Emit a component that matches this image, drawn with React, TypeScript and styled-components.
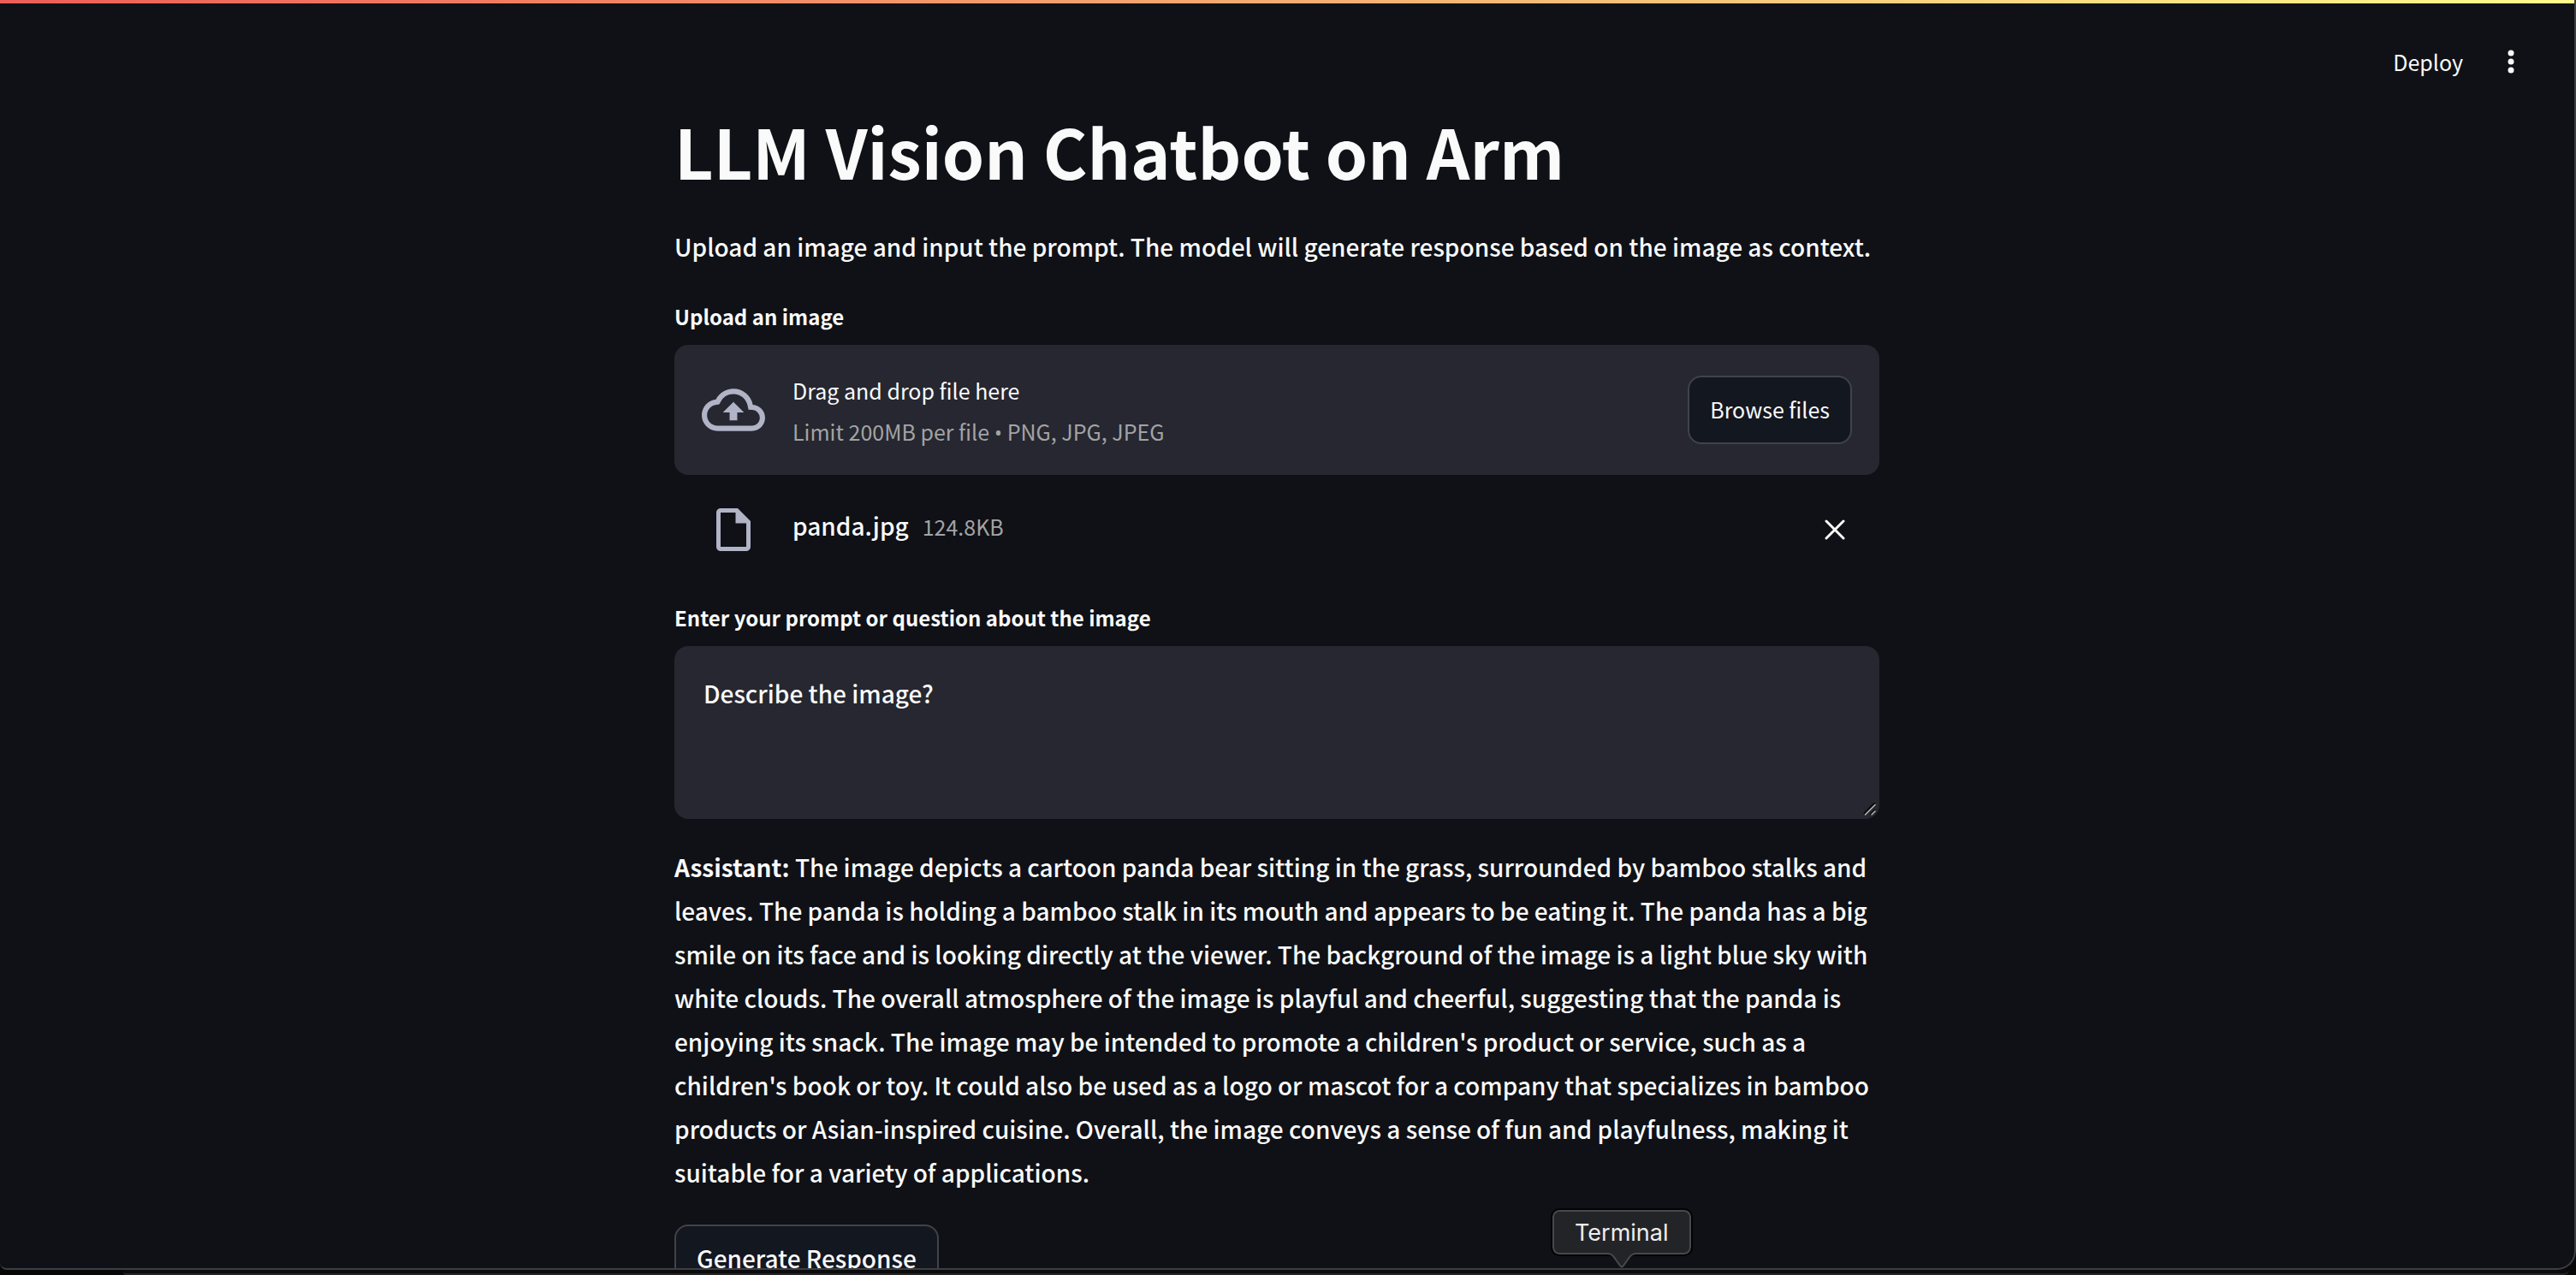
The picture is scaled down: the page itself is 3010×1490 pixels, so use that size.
import React, { useState } from "react";
import styled, { createGlobalStyle } from "styled-components";

const GlobalStyle = createGlobalStyle`
  html, body, #root { height: 100%; }
  body {
    margin: 0;
    overflow: hidden;
    background: #070708;
    color: #fafafa;
    font-family: "Noto Sans CJK SC", "Noto Sans", sans-serif;
    font-size: 28px;
    font-weight: 500;
    line-height: 51px;
  }
  * { box-sizing: border-box; }
`;

const Desktop = styled.div`
  height: 100%;
  display: flex;
  flex-direction: column;
`;

const BrowserWindow = styled.div`
  flex: 1;
  min-height: 0;
  overflow: hidden;
  display: flex;
  flex-direction: column;
  background: #0f1116;
  border: solid #3d3e42;
  border-width: 0 2px 2px 0;
  border-radius: 0 0 22px 8px;
`;

const DockEdge = styled.div`
  height: 6px;
  flex: none;
  margin: 0 8px 0 144px;
  border-bottom: 2px solid #242428;
  border-radius: 0 0 16px 8px;
  background: #0b0b0d;
`;

const Decoration = styled.div`
  height: 4px;
  flex: none;
  background: linear-gradient(90deg, #ed5e58, #fffa8c);
`;

const Header = styled.header`
  flex: none;
  display: flex;
  justify-content: flex-end;
  align-items: center;
  gap: 32px;
  height: 120px;
  padding: 16px 50px 0 0;
`;

const GhostButton = styled.button`
  display: flex;
  align-items: center;
  justify-content: center;
  padding: 0;
  border: 0;
  background: none;
  color: inherit;
  font: inherit;
  font-size: 25px;
  font-weight: 400;
  line-height: 40px;
`;

const Main = styled.main`
  flex: 1;
  min-height: 0;
  padding-right: 24px;
`;

const Column = styled.div`
  width: 100%;
  max-width: 1408px;
  margin: 0 auto;
  display: flex;
  flex-direction: column;
`;

const Title = styled.h1`
  margin: 0;
  font-size: 79px;
  line-height: 104px;
  font-weight: 700;
`;

const Paragraph = styled.p`
  margin: 0;
  padding-bottom: 35px;
`;

const Intro = styled(Paragraph)`
  padding-top: 35px;
`;

const Label = styled.label`
  margin-bottom: 12px;
  font-size: 24px;
  line-height: 42px;
  font-weight: 700;
`;

const Dropzone = styled.section`
  display: flex;
  align-items: center;
  height: 152px;
  padding: 0 32px;
  border-radius: 16px;
  background: #262730;
`;

const IconCell = styled.span`
  display: flex;
  align-items: center;
  justify-content: center;
  width: 74px;
  margin-right: 32px;
  color: #b1b4c6;
`;

const DropText = styled.div`
  flex: 1;
  display: flex;
  flex-direction: column;
  padding-top: 2px;
  font-size: 25px;
  font-weight: 400;
  line-height: 48px;
`;

const Muted = styled.span`
  color: #a3a3a5;
  font-size: 25px;
  font-weight: 400;
`;

const Bullet = styled.span`
  font-family: "Open Sans", sans-serif;
`;

const Button = styled.button<{ $large?: boolean }>`
  flex: none;
  align-self: ${(p) => (p.$large ? "flex-start" : "auto")};
  height: 80px;
  padding: 0 24px 2px;
  border: 2px solid #41434b;
  border-radius: 16px;
  background: #131720;
  color: inherit;
  font: inherit;
  font-size: ${(p) => (p.$large ? 28 : 25)}px;
  font-weight: ${(p) => (p.$large ? 500 : 400)};
`;

const FileInput = styled.input`
  display: none;
`;

const FileRow = styled.div`
  display: flex;
  align-items: center;
  height: 128px;
  padding: 0 32px;
  margin-bottom: 18px;
`;

const FileInfo = styled.div`
  display: flex;
  align-items: baseline;
  gap: 16px;
  padding-bottom: 8px;
`;

const RemoveButton = styled(GhostButton)`
  margin-left: auto;
  width: 40px;
  height: 40px;
`;

const PromptBox = styled.div`
  position: relative;
  display: flex;
  margin-bottom: 31px;
`;

const Prompt = styled.textarea`
  flex: 1;
  height: 202px;
  padding: 30px 34px;
  border: 0;
  border-radius: 16px;
  outline: 0;
  resize: none;
  background: #262730;
  color: inherit;
  font: inherit;
`;

const Grip = styled.svg`
  position: absolute;
  right: 3px;
  bottom: 3px;
`;

const DockTip = styled.div`
  position: absolute;
  left: 1814px;
  top: 1414px;
  display: flex;
  flex-direction: column;
  align-items: center;
`;

const TipLabel = styled.div`
  height: 52px;
  padding: 0 24px;
  border: 2px solid #48494c;
  border-radius: 8px;
  outline: 2px solid #030304;
  background: #232428;
  color: #eeeeee;
  font-family: Inter, sans-serif;
  font-size: 27px;
  font-weight: 400;
  line-height: 50px;
`;

const TipArrow = styled.svg`
  margin-top: -2px;
  position: relative;
`;

export default function App() {
  const [prompt, setPrompt] = useState("Describe the image?");

  return (
    <Desktop>
      <GlobalStyle />
      <BrowserWindow>
        <Decoration />
        <Header>
          <GhostButton type="button">Deploy</GhostButton>
          <GhostButton type="button" aria-label="Menu">
            <svg width="48" height="40" viewBox="0 0 48 40" fill="currentColor">
              <circle cx="24" cy="10" r="3.5" />
              <circle cx="24" cy="20" r="3.5" />
              <circle cx="24" cy="30" r="3.5" />
            </svg>
          </GhostButton>
        </Header>
        <Main>
          <Column>
            <Title>LLM Vision Chatbot on Arm</Title>
            <Intro>
              Upload an image and input the prompt. The model will generate response based on the image as context.
            </Intro>

            <Label htmlFor="image">Upload an image</Label>
            <Dropzone>
              <IconCell>
                <svg width="74" height="74" viewBox="0 0 24 24" fill="currentColor">
                  <path d="M19.35 10.04A7.49 7.49 0 0 0 12 4C9.11 4 6.6 5.64 5.35 8.04A5.994 5.994 0 0 0 0 14c0 3.31 2.69 6 6 6h13c2.76 0 5-2.24 5-5 0-2.64-2.05-4.78-4.65-4.96zM19 18H6c-2.21 0-4-1.79-4-4 0-2.05 1.53-3.76 3.56-3.97l1.07-.11.5-.95A5.469 5.469 0 0 1 12 6c2.62 0 4.88 1.86 5.39 4.43l.3 1.5 1.53.11A2.98 2.98 0 0 1 22 15c0 1.65-1.35 3-3 3zM8 13h2.550v3h2.900v-3H16l-4-4z" />
                </svg>
              </IconCell>
              <DropText>
                <span>Drag and drop file here</span>
                <Muted>
                  Limit 200MB per file <Bullet>•</Bullet> PNG, JPG, JPEG
                </Muted>
              </DropText>
              <FileInput id="image" type="file" accept=".png,.jpg,.jpeg" />
              <Button type="button">Browse files</Button>
            </Dropzone>
            <FileRow>
              <IconCell>
                <svg width="60" height="60" viewBox="0 0 24 24" fill="currentColor">
                  <path d="M14 2H6c-1.100 0-1.990.9-1.990 2L4 20c0 1.100.89 2 1.990 2H18c1.100 0 2-.9 2-2V8l-6-6zM6 20V4h7v5h5v11H6z" />
                </svg>
              </IconCell>
              <FileInfo>
                <span>panda.jpg</span>
                <Muted>124.8KB</Muted>
              </FileInfo>
              <RemoveButton type="button" aria-label="Remove file">
                <svg width="24" height="24" viewBox="0 0 24 24" fill="none" stroke="currentColor" strokeWidth="3" strokeLinecap="round">
                  <path d="M2 2L22 22M22 2L2 22" />
                </svg>
              </RemoveButton>
            </FileRow>

            <Label htmlFor="prompt">Enter your prompt or question about the image</Label>
            <PromptBox>
              <Prompt id="prompt" value={prompt} onChange={(e) => setPrompt(e.target.value)} />
              <Grip width="16" height="16" viewBox="0 0 16 16" fill="none" strokeLinecap="round">
                <path d="M1.500 12.500L13 1M9 13.500L13.500 9" stroke="#08080a" strokeWidth="2" />
                <path d="M2.500 14L14 2.500M10 14L14 10" stroke="#b4b4b8" strokeWidth="1.600" />
              </Grip>
            </PromptBox>

            <Paragraph>
              <strong>Assistant:</strong> The image depicts a cartoon panda bear sitting in the grass, surrounded by
              bamboo stalks and leaves. The panda is holding a bamboo stalk in its mouth and appears to be eating it.
              The panda has a big smile on its face and is looking directly at the viewer. The background of the image
              is a light blue sky with white clouds. The overall atmosphere of the image is playful and cheerful,
              suggesting that the panda is enjoying its snack. The image may be intended to promote a children's
              product or service, such as a children's book or toy. It could also be used as a logo or mascot for a
              company that specializes in bamboo products or Asian-inspired cuisine. Overall, the image conveys a sense
              of fun and playfulness, making it suitable for a variety of applications.
            </Paragraph>
            <Button type="button" $large>
              Generate Response
            </Button>
          </Column>
        </Main>
      </BrowserWindow>
      <DockEdge />
      <DockTip role="tooltip">
        <TipLabel>Terminal</TipLabel>
        <TipArrow width="40" height="20" viewBox="0 0 40 20">
          <path d="M2 0C9 0 10 4 13 8L18 15Q20 18 22 15L27 8C30 4 31 0 38 0Z" fill="#232428" />
          <path d="M2 1C9 1 10 4 13 8L18 15Q20 18 22 15L27 8C30 4 31 1 38 1" fill="none" stroke="#48494c" strokeWidth="2" />
        </TipArrow>
      </DockTip>
    </Desktop>
  );
}
